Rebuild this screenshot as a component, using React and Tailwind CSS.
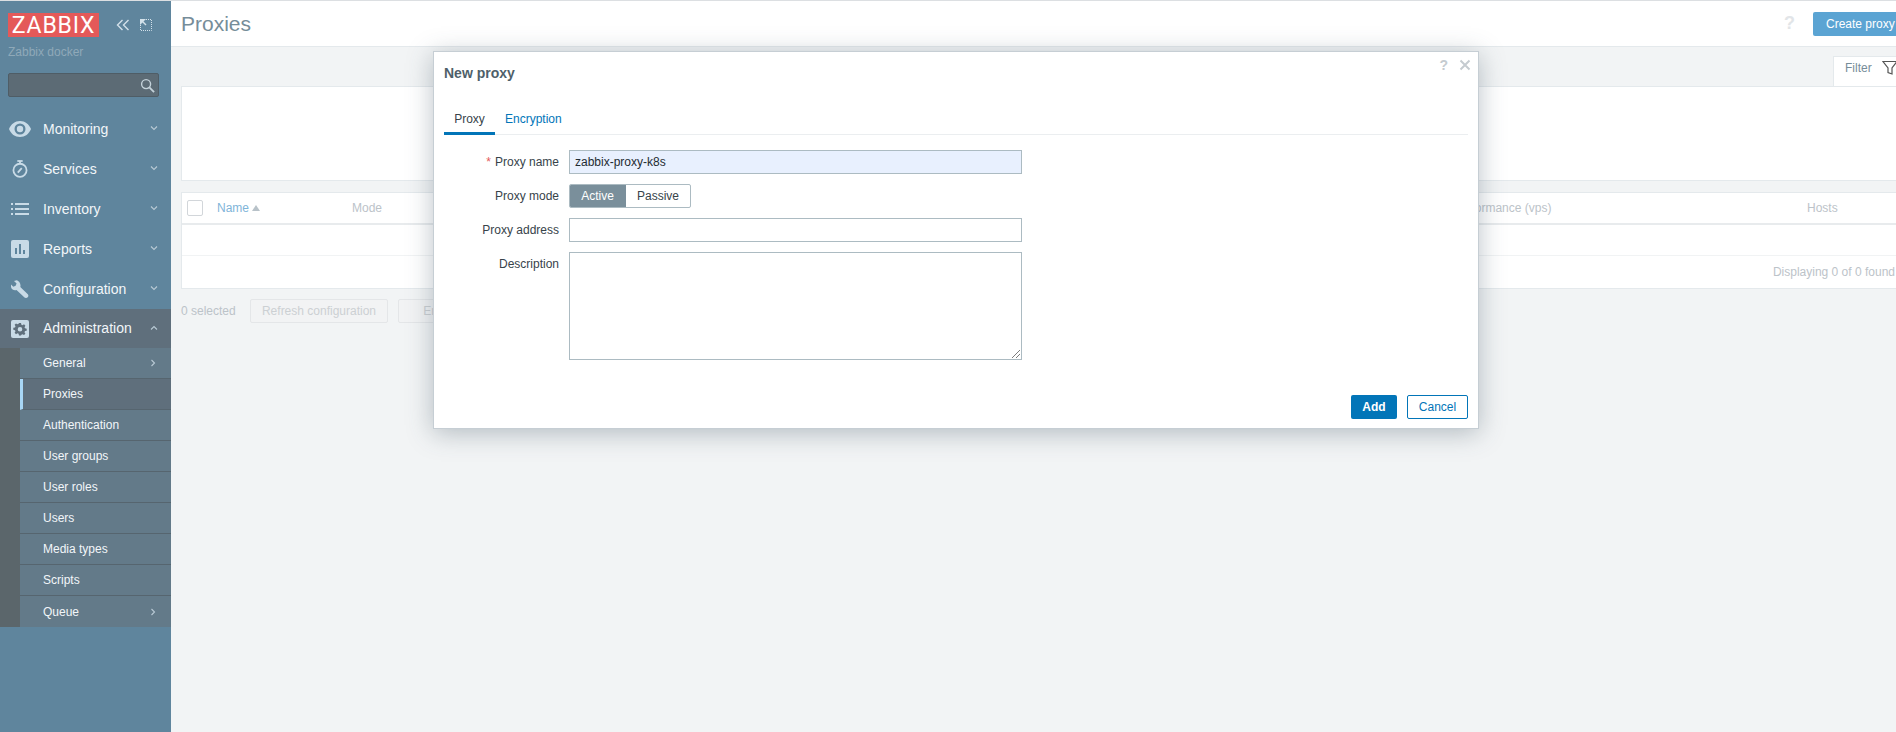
import React from "react";

const Eye = () => (
  <svg viewBox="0 0 22 16" className="w-[22px] h-[16px] text-[#c9dbe7]" fill="currentColor">
    <path fillRule="evenodd" d="M11 0C6 0 2 3 0 8c2 5 6 8 11 8s9-3 11-8c-2-5-6-8-11-8zm0 2.500a5.500 5.500 0 1 1 0 11 5.500 5.500 0 0 1 0-11z" />
    <circle cx="11" cy="8" r="3.200" />
  </svg>
);
const Watch = () => (
  <svg viewBox="0 0 18 20" className="w-[16px] h-[18px] text-[#c9dbe7]" fill="none" stroke="currentColor">
    <circle cx="9" cy="11.500" r="7.400" strokeWidth="2" />
    <path d="M6 1h6" strokeWidth="2" />
    <path d="M9 1v3" strokeWidth="2" />
    <path d="M6.500 14l4.500-5" strokeWidth="2" />
  </svg>
);
const ListI = () => (
  <svg viewBox="0 0 18 12" className="w-[18px] h-[12px] text-[#c9dbe7]" fill="currentColor">
    <rect x="0" y="0" width="2" height="2" /><rect x="4" y="0" width="14" height="2" />
    <rect x="0" y="5" width="2" height="2" /><rect x="4" y="5" width="14" height="2" />
    <rect x="0" y="10" width="2" height="2" /><rect x="4" y="10" width="14" height="2" />
  </svg>
);
const Bars = () => (
  <svg viewBox="0 0 18 18" className="w-[18px] h-[18px] text-[#c9dbe7]">
    <rect width="18" height="18" rx="2" fill="currentColor" />
    <rect x="4" y="8" width="2" height="6" fill="#5f859d" />
    <rect x="8" y="4" width="2" height="10" fill="#5f859d" />
    <rect x="12" y="10" width="2" height="4" fill="#5f859d" />
  </svg>
);
const Wrench = () => (
  <svg viewBox="0 0 18 18" className="w-[18px] h-[18px] text-[#c9dbe7]" fill="currentColor">
    <path d="M5.600.2 3 .9l2.600 2.700-1 2.200-2.300.9L0 4.400c-.4 2.200.2 4 1.600 5 1.200.8 2.600.9 3.900.5l8 7.600c.8.7 2.300.7 3.200-.2.9-1 .9-2.200.1-3L9.300 7c.5-1.800.1-3.500-1-5C7.600 1 6.700.5 5.600.2z" />
  </svg>
);
const Gear = () => (
  <svg viewBox="0 0 18 18" className="w-[18px] h-[18px]">
    <rect width="18" height="18" rx="2" fill="#c9dbe7" />
    <path fillRule="evenodd" fill="#5f6f7c" d="M8 3h2l.4 1.700 1.100.5 1.500-.9 1.400 1.400-.9 1.500.5 1.100 1.700.4v2l-1.700.4-.5 1.100.9 1.500-1.400 1.400-1.500-.9-1.100.5L10 15.500H8l-.4-1.700-1.100-.5-1.500.9-1.400-1.400.9-1.500-.5-1.100-1.700-.4v-2l1.700-.4.500-1.100-.9-1.500 1.400-1.400 1.500.9 1.100-.5zM9 7a2.300 2.300 0 1 0 0 4.600A2.300 2.300 0 0 0 9 7z" />
  </svg>
);

const Chevron = ({ dir = "down" }) => {
  const d = { down: "M1 1.500l3 3 3-3", up: "M1 4.500l3-3 3 3", right: "M1.500 1l3 3-3 3" }[dir];
  return (
    <svg viewBox="0 0 8 8" className="w-[8px] h-[8px] text-[#b9cad5]" fill="none" stroke="currentColor" strokeWidth="1.100">
      <path d={d} />
    </svg>
  );
};

const nav = [
  ["Monitoring", <Eye />],
  ["Services", <Watch />],
  ["Inventory", <ListI />],
  ["Reports", <Bars />],
  ["Configuration", <Wrench />],
];
const sub = [
  ["General", true],
  ["Proxies", false, true],
  ["Authentication"],
  ["User groups"],
  ["User roles"],
  ["Users"],
  ["Media types"],
  ["Scripts"],
  ["Queue", true],
];

function NavRow({ label, icon, open }) {
  return (
    <div className={`flex items-center pr-[13px] ${open ? "h-[39px] bg-[#5f6f7c]" : "h-[40px]"}`}>
      <div className="w-[43px] shrink-0 flex justify-center pr-[3px]">{icon}</div>
      <span className="flex-1 text-[14px] text-[#f2f6f9]">{label}</span>
      <Chevron dir={open ? "up" : "down"} />
    </div>
  );
}

function Sidebar() {
  return (
    <aside className="w-[171px] shrink-0 h-full bg-[#5f859d] flex flex-col">
      <div className="flex items-center pl-[8px] pt-[12px] gap-[17px]">
        <div className="w-[91px] h-[24px] bg-[#e45959] flex items-center justify-center text-white text-[23px] font-['Roboto',sans-serif] font-normal tracking-[0.8px] leading-none">
          ZABBIX
        </div>
        <div className="flex items-center gap-[10px] text-[#d3e1ea]">
          <svg viewBox="0 0 14 12" className="w-[14px] h-[12px]" fill="none" stroke="currentColor" strokeWidth="1.400">
            <path d="M6.500 1l-5 5 5 5M12.500 1l-5 5 5 5" />
          </svg>
          <svg viewBox="0 0 12 12" className="w-[12px] h-[12px]" fill="none" stroke="currentColor">
            <path d="M6 .5h5.500V11.500H.5V6" strokeDasharray="1 1" />
            <path d="M0 0h6L0 6z" fill="currentColor" stroke="none" />
            <path d="M2 2l4 4" strokeWidth="1.500" />
          </svg>
        </div>
      </div>
      <div className="pl-[8px] mt-[8px] text-[12px] leading-[14px] font-medium text-[#8fa9b9]">Zabbix docker</div>
      <div className="ml-[8px] mr-[12px] mt-[14px] h-[24px] bg-[#5c6b75] border border-[#4f5d66] rounded-[2px] flex items-center justify-end pr-[3px]">
        <svg viewBox="0 0 16 16" className="w-[15px] h-[15px] text-[#c4d2da]" fill="none" stroke="currentColor" strokeWidth="1.500">
          <circle cx="6.500" cy="6.500" r="4.800" />
          <path d="M10 10l5 5" strokeWidth="2" />
        </svg>
      </div>
      <nav className="mt-[12px]">
        {nav.map(([l, i]) => <NavRow key={l} label={l} icon={i} />)}
        <NavRow label="Administration" icon={<Gear />} open />
        <div className="bg-[#5b666b] pl-[20px]">
          {sub.map(([l, arrow, active], idx) => (
            <div
              key={l}
              className={`h-[31px] flex items-center pr-[13px] text-[12px] text-[#f2f6f9] ${idx < sub.length - 1 ? "border-b border-[#56656f]" : ""} ${active ? "bg-[#5f6f7c] border-l-[3px] border-l-[#a8d6f5] pl-[20px]" : "bg-[#637a89] pl-[23px]"}`}
            >
              <span className="flex-1">{l}</span>
              {arrow && <Chevron dir="right" />}
            </div>
          ))}
        </div>
      </nav>
    </aside>
  );
}

function Main() {
  return (
    <main className="flex-1 min-w-0 h-full overflow-hidden bg-[#f2f4f5]">
      <div className="w-[1736px]">
        <header className="h-[46px] bg-white border-b border-[#e4e9ec] flex items-center pl-[10px]">
          <h1 className="flex-1 text-[21px] text-[#768d99]">Proxies</h1>
          <span className="text-[18px] font-bold text-[#e2e5e8] mr-[18px]">?</span>
          <button className="h-[24px] w-[94px] bg-[#5ba4d3] rounded-[2px] text-white text-[12px] text-left pl-[13px]">Create proxy</button>
        </header>
        <div className="pl-[10px]">
          <div className="flex justify-end h-[39px] items-end">
            <div className="w-[74px] h-[30px] bg-white border-t border-l border-[#e4e9ec] flex items-start pt-[3px] pl-[11px] gap-[10px] text-[#768d99]">
              <span className="leading-[16px]">Filter</span>
              <svg viewBox="0 0 16 16" className="w-[16px] h-[16px] text-[#555]" fill="none" stroke="currentColor" strokeWidth="1.200">
                <path d="M1 1.500h14L10 8v6l-4-1.500V8z" />
              </svg>
            </div>
          </div>
          <div className="h-[95px] bg-white border border-[#e4e9ec]" />
          <div className="mt-[11px] bg-white border border-[#e4e9ec]">
            <div className="h-[32px] flex items-center border-b-2 border-[#e8ebed] text-[#bcc3c9]">
              <span className="ml-[5px] w-[16px] h-[16px] border border-[#d2d6da] rounded-[2px] bg-white" />
              <span className="ml-[14px] w-[135px] flex items-center gap-[3px]">
                <span className="text-[#7fb5d9]">Name</span>
                <svg viewBox="0 0 8 6" className="w-[8px] h-[6px] text-[#b8c2c9]" fill="currentColor"><path d="M4 0l4 6H0z" /></svg>
              </span>
              <span className="w-[1050px]">Mode</span>
              <span className="w-[405px]">Required performance (vps)</span>
              <span>Hosts</span>
            </div>
            <div className="h-[31px] border-b border-[#f1f3f4]" />
            <div className="h-[32px] flex items-center justify-end pr-[11px] text-[#bcc3c9]">Displaying 0 of 0 found</div>
          </div>
          <div className="mt-[10px] h-[24px] flex items-center gap-[10px] text-[#bcc3c9]">
            <span className="w-[59px]">0 selected</span>
            <button className="h-[24px] w-[138px] border border-[#e4e6e8] bg-[#f2f3f4] rounded-[2px] text-[#ccd0d3]">Refresh configuration</button>
            <button className="h-[24px] w-[120px] border border-[#e4e6e8] bg-[#f2f3f4] rounded-[2px] text-[#ccd0d3]">Enable hosts</button>
          </div>
        </div>
      </div>
    </main>
  );
}

const Label = ({ children, req }) => (
  <div className="w-[115px] shrink-0 text-right text-[#37434a] leading-[14px]">
    {req && <span className="text-[#e45959] mr-[4px]">*</span>}
    {children}
  </div>
);

function Modal() {
  return (
    <div className="absolute left-[433px] top-[50px] w-[1046px] h-[378px] bg-white border border-[#c6ced4] shadow-[0_4px_24px_rgba(60,80,95,0.35)] px-[10px] flex flex-col">
      <div className="absolute right-[7px] top-[6px] flex items-center gap-[11px] text-[#c5cbd0]">
        <span className="text-[14px] font-bold leading-none">?</span>
        <svg viewBox="0 0 12 12" className="w-[12px] h-[12px]" fill="none" stroke="currentColor" strokeWidth="2"><path d="M1.500 1.500l9 9M10.500 1.500l-9 9" /></svg>
      </div>
      <h2 className="mt-[13px] text-[14px] leading-[17px] font-bold text-[#4f5f6a]">New proxy</h2>
      <div className="mt-[28px] h-[25px] flex border-b border-[#ebeef0]">
        <div className="w-[51px] h-[25px] pt-[2px] text-center text-[#37434a] leading-[14px] border-b-[3px] border-[#0275b8]">Proxy</div>
        <div className="ml-[10px] pt-[2px] text-[#0275b8] leading-[14px]">Encryption</div>
      </div>
      <div className="mt-[15px] flex flex-col gap-[10px]">
        <div className="flex items-center gap-[10px]">
          <Label req>Proxy name</Label>
          <div className="w-[453px] h-[24px] bg-[#e8f0fe] border border-[#acbbc2] flex items-center pl-[5px] text-[#1f2c33]">zabbix-proxy-k8s</div>
        </div>
        <div className="flex items-center gap-[10px]">
          <Label>Proxy mode</Label>
          <div className="flex h-[24px] w-[122px] border border-[#acbbc2] rounded-[2px] overflow-hidden">
            <div className="w-[57px] -ml-px bg-[#7a8f9b] text-white flex items-center justify-center">Active</div>
            <div className="flex-1 flex items-center justify-center text-[#37434a]">Passive</div>
          </div>
        </div>
        <div className="flex items-center gap-[10px]">
          <Label>Proxy address</Label>
          <div className="w-[453px] h-[24px] bg-white border border-[#acbbc2]" />
        </div>
        <div className="flex items-start gap-[10px]">
          <div className="pt-[5px]"><Label>Description</Label></div>
          <div className="relative w-[453px] h-[108px] bg-white border border-[#acbbc2]">
            <svg viewBox="0 0 8 8" className="absolute right-[1px] bottom-[1px] w-[8px] h-[8px] text-[#444]" fill="none" stroke="currentColor" strokeWidth="0.700">
              <path d="M0 8L8 0M4 8l4-4" />
            </svg>
          </div>
        </div>
      </div>
      <div className="mt-auto mb-[9px] flex justify-end gap-[10px]">
        <button className="w-[46px] h-[24px] bg-[#0275b8] rounded-[2px] text-white font-bold">Add</button>
        <button className="w-[61px] h-[24px] bg-white border border-[#0275b8] rounded-[2px] text-[#0275b8]">Cancel</button>
      </div>
    </div>
  );
}

export default function App() {
  return (
    <div className="relative w-[1896px] h-[732px] overflow-hidden text-[12px] font-['Liberation_Sans',Arial,sans-serif] border-t border-[#dcdfe2] flex">
      <Sidebar />
      <Main />
      <Modal />
    </div>
  );
}
